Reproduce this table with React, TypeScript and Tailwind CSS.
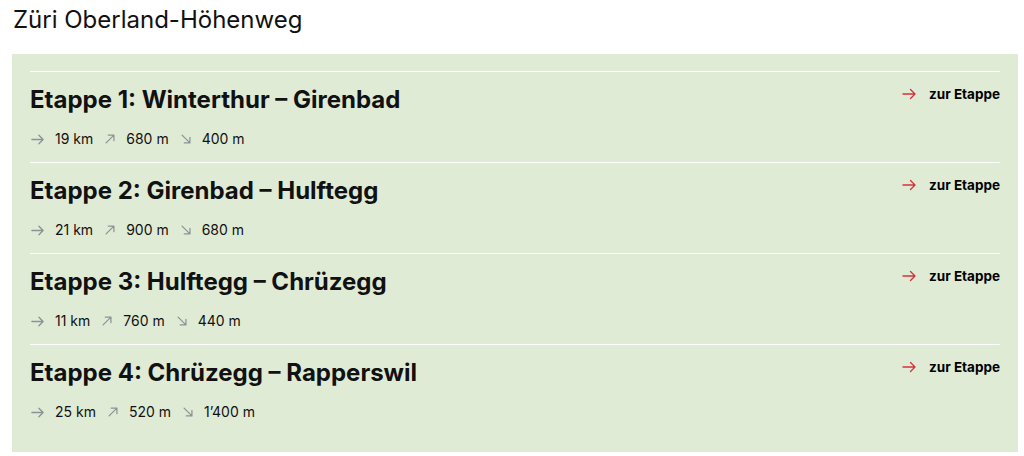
import React from "react";

const stages = [
  { t: "Etappe 1: Winterthur – Girenbad", d: "19 km", u: "680 m", dn: "400 m" },
  { t: "Etappe 2: Girenbad – Hulftegg", d: "21 km", u: "900 m", dn: "680 m" },
  { t: "Etappe 3: Hulftegg – Chrüzegg", d: "11 km", u: "760 m", dn: "440 m" },
  { t: "Etappe 4: Chrüzegg – Rapperswil", d: "25 km", u: "520 m", dn: "1’400 m" },
];

const ArrowRight = ({ className }: { className?: string }) => (
  <svg viewBox="0 0 16 16" className={className} fill="none" stroke="currentColor" strokeWidth="1.4" strokeLinecap="round" strokeLinejoin="round">
    <path d="M2 8h12M9.5 3.5 14 8l-4.5 4.5" />
  </svg>
);
const ArrowUp = ({ className }: { className?: string }) => (
  <svg viewBox="0 0 16 16" className={className} fill="none" stroke="currentColor" strokeWidth="1.4" strokeLinecap="round" strokeLinejoin="round">
    <path d="M3.5 12.5 12.5 3.5M6 3.5h6.5V10" />
  </svg>
);
const ArrowDown = ({ className }: { className?: string }) => (
  <svg viewBox="0 0 16 16" className={className} fill="none" stroke="currentColor" strokeWidth="1.4" strokeLinecap="round" strokeLinejoin="round">
    <path d="M3.5 3.5 12.5 12.5M12.5 6v6.5H6" />
  </svg>
);

export default function App() {
  return (
    <div className="bg-white min-h-[456px] text-[#111]" style={{ fontFamily: "Inter, 'Noto Sans', sans-serif" }}>
      <h1 className="pl-[13px] pt-[4px] text-[24px] leading-[32px] font-normal">Züri Oberland-Höhenweg</h1>
      <div className="ml-[12px] mr-[6px] mt-[18px] bg-[#e0ebd5] px-[18px] pt-[17px] pb-[17px]">
        {stages.map((s) => (
          <div key={s.t} className="border-t border-white pt-[16px] pb-[13px]">
            <div className="flex items-start justify-between">
              <h2 className="text-[24px] leading-[24px] font-bold">{s.t}</h2>
              <a className="-mt-[2px] flex items-center gap-[12px] text-[13.5px] leading-4 font-bold text-black">
                <ArrowRight className="w-[16px] h-[16px] text-[#d3343c]" />
                zur Etappe
              </a>
            </div>
            <div className="mt-[17px] flex items-center text-[14px] leading-[20px] text-[#111]">
              <ArrowRight className="w-[15px] h-[15px] text-[#8d9196]" />
              <span className="ml-[10px]">{s.d}</span>
              <ArrowUp className="ml-[10px] w-[14px] h-[14px] text-[#8d9196]" />
              <span className="ml-[9px]">{s.u}</span>
              <ArrowDown className="ml-[10px] w-[14px] h-[14px] text-[#8d9196]" />
              <span className="ml-[9px]">{s.dn}</span>
            </div>
          </div>
        ))}
      </div>
    </div>
  );
}
